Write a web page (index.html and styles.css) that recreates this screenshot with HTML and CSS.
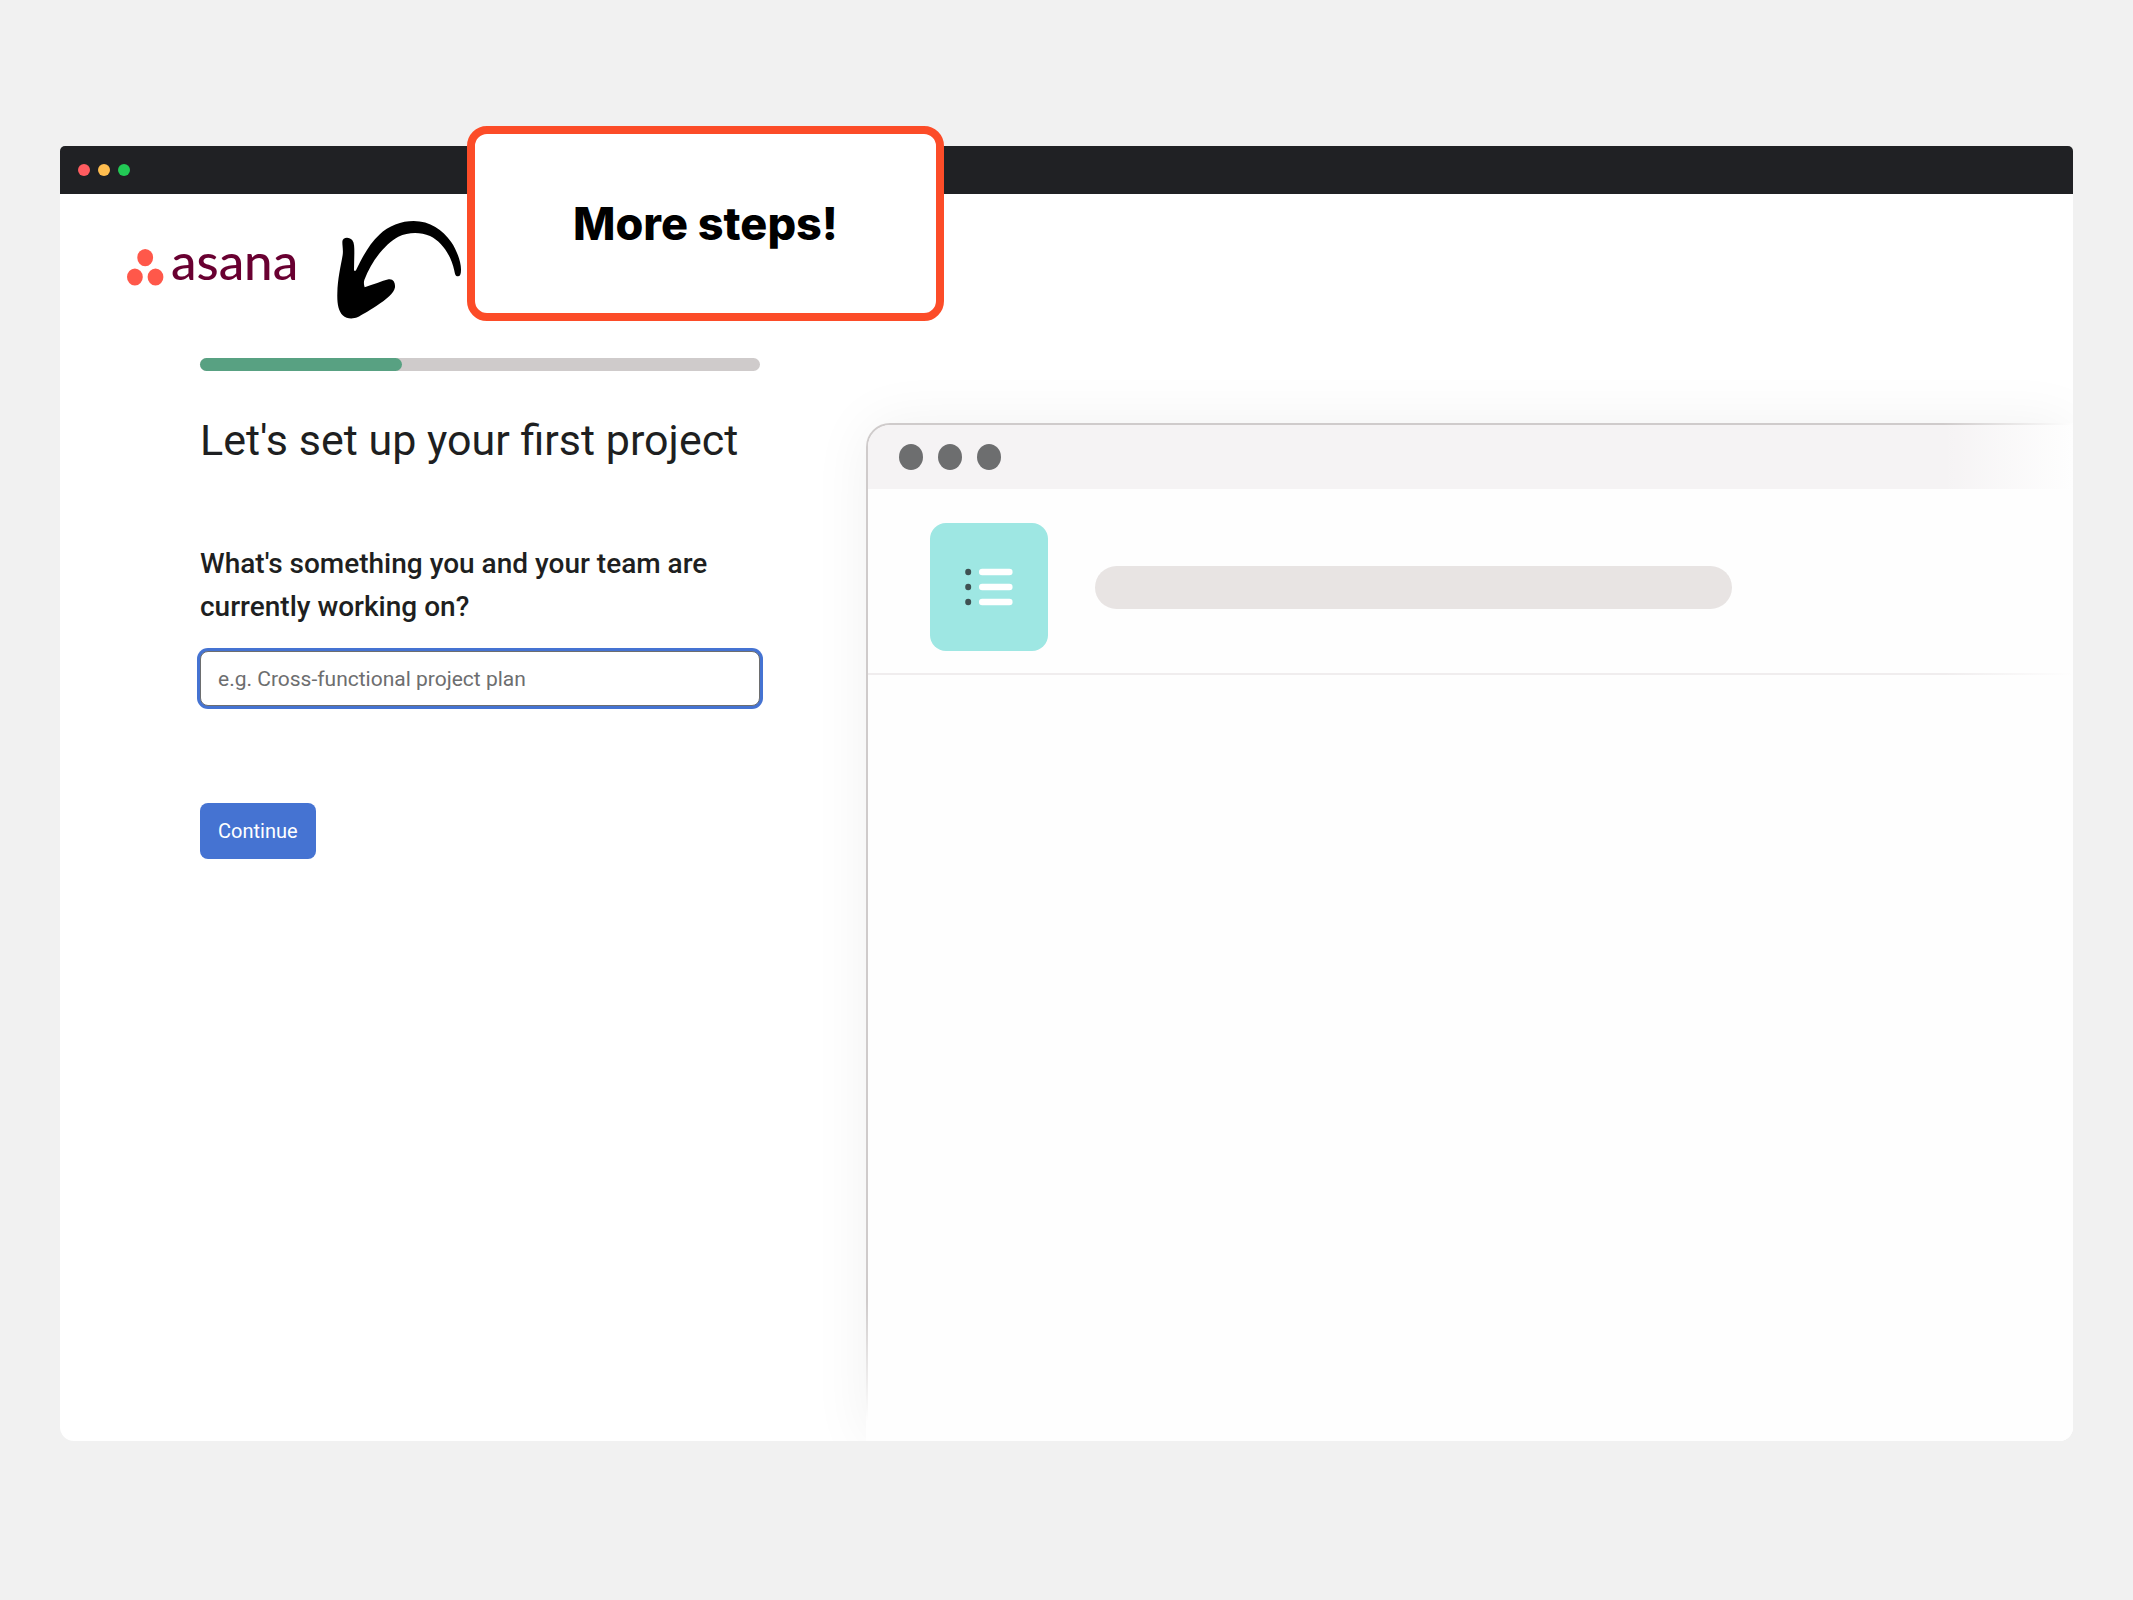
FILE: index.html
```html
<!DOCTYPE html>
<html lang="en">
<head>
<meta charset="utf-8">
<meta name="viewport" content="width=device-width, initial-scale=1">
<title>Asana – Set up your first project</title>
<link rel="stylesheet" href="styles.css">
</head>
<body>
<div class="window">
  <div class="titlebar">
    <span class="light light-close"></span>
    <span class="light light-minimize"></span>
    <span class="light light-expand"></span>
  </div>
  <div class="content">
    <header class="header">
      <a class="logo" href="#">
        <svg class="logo-mark" viewBox="0 0 37 37" aria-hidden="true">
          <ellipse cx="18.2" cy="8.7" rx="7.9" ry="8.6"/>
          <ellipse cx="7.9" cy="28" rx="7.9" ry="8.6"/>
          <ellipse cx="28.5" cy="28" rx="7.9" ry="8.6"/>
        </svg>
        <span class="logo-word">asana</span>
      </a>
    </header>
    <main class="setup">
      <form class="form">
        <div class="progress" role="progressbar" aria-label="Setup progress" aria-valuenow="36" aria-valuemin="0" aria-valuemax="100">
          <div class="progress-fill" style="width: 36%"></div>
        </div>
        <h1 class="title">Let's set up your first project</h1>
        <label class="label" for="project">What's something you and your team are currently working on?</label>
        <input class="input" id="project" type="text" placeholder="e.g. Cross-functional project plan">
        <button class="button" type="button">Continue</button>
      </form>
      <section class="preview" aria-label="Project preview">
        <div class="preview-bar">
          <span class="preview-dot"></span>
          <span class="preview-dot"></span>
          <span class="preview-dot"></span>
        </div>
        <div class="preview-head">
          <div class="tile">
            <svg class="tile-icon" viewBox="0 0 48 38" aria-hidden="true">
              <g fill="#3f5152">
                <ellipse cx="3.2" cy="4" rx="3" ry="3.3"/>
                <ellipse cx="3.2" cy="19" rx="3" ry="3.3"/>
                <ellipse cx="3.2" cy="34" rx="3" ry="3.3"/>
              </g>
              <g fill="#fff">
                <rect x="14" y="0.8" width="33.6" height="6.4" rx="3.2"/>
                <rect x="14" y="15.8" width="33.6" height="6.4" rx="3.2"/>
                <rect x="14" y="30.8" width="33.6" height="6.4" rx="3.2"/>
              </g>
            </svg>
          </div>
          <div class="name-bar"></div>
        </div>
      </section>
    </main>
  </div>
  <svg class="arrow" viewBox="0 0 480 390" aria-hidden="true">
    <path d="M67 125C67 111 89 110 97 121C103 129 103 142 103 160L102 210Q104 216 108 211C130 165 150 130 178 104C205 77 245 63 281 63C330 63 368 90 393 125C412 152 424 190 423 210C423 222 420 229 414 229C406 229 405 222 403 212C393 165 365 125 330 108C300 95 265 96 235 110C200 128 155 180 133 240Q130 250 134 262C160 254 185 243 206 238C220 236 226 248 225 262C222 280 200 298 170 317C145 333 125 345 112 352C100 357 80 358 68 346C55 332 51 310 52 280C53 235 62 200 68 165C70 150 67 138 67 125Z"/>
  </svg>
  <div class="callout">More steps!</div>
</div>
</body>
</html>
```
FILE: styles.css
```css
* {
  box-sizing: border-box;
}

body {
  display: flex;
  min-height: 100vh;
  margin: 0;
  padding: 146px 60px 159px;
  background: #f1f1f1;
  color: #1e1f21;
  font-family: Roboto, "Liberation Sans", sans-serif;
}

.window {
  position: relative;
  display: flex;
  flex: 1;
  flex-direction: column;
  min-width: 0;
}

.titlebar {
  display: flex;
  align-items: center;
  gap: 8px;
  height: 48px;
  padding: 0 18px;
  border-radius: 5px 5px 0 0;
  background: #202124;
}

.light {
  width: 12px;
  height: 12px;
  border-radius: 50%;
}

.light-close {
  background: #ff5c60;
}

.light-minimize {
  background: #ffbd4f;
}

.light-expand {
  background: #22c955;
}

.content {
  display: flex;
  flex: 1;
  flex-direction: column;
  overflow: hidden;
  border-radius: 0 0 14px 14px;
  background: #fff;
}

.header {
  padding: 37px 67px 0;
}

.logo {
  display: inline-flex;
  align-items: flex-end;
  gap: 7px;
  color: #690031;
  text-decoration: none;
}

.logo-mark {
  width: 37px;
  height: 37px;
  margin-bottom: 5px;
  fill: #ff584a;
}

.logo-word {
  font: 500 51px/60px Lato, sans-serif;
}

.setup {
  display: grid;
  flex: 1;
  grid-template-columns: 2fr 3fr;
}

.form {
  display: flex;
  flex-direction: column;
  align-items: stretch;
  padding: 67px 105px 80px 140px;
}

.progress {
  height: 13px;
  border-radius: 7px;
  background: #cfcbcb;
}

.progress-fill {
  height: 100%;
  border-radius: 7px;
  background: #58a182;
}

.title {
  margin: 39px 0 0;
  font-size: 43px;
  font-weight: 400;
  line-height: 60px;
}

.label {
  margin-top: 72px;
  font-size: 28px;
  font-weight: 500;
  line-height: 43px;
}

.input {
  height: 55px;
  margin-top: 23px;
  padding: 0 17px;
  border: 1px solid #6d6e6f;
  border-radius: 8px;
  outline: 0;
  background: #fff;
  box-shadow: 0 0 0 3px #4573d2;
  color: inherit;
  font: 400 21px/28px Roboto, sans-serif;
}

.input::placeholder {
  color: #6d6e6f;
  opacity: 1;
}

.button {
  align-self: flex-start;
  height: 56px;
  margin-top: 97px;
  padding: 0 18px;
  border: 0;
  border-radius: 8px;
  background: #4573d2;
  color: #fff;
  font: 400 20px/28px Roboto, sans-serif;
}

.preview {
  position: relative;
  margin: 132px 0 0 1px;
  border: 2px solid #cfcbcb;
  border-width: 2px 0 0 2px;
  border-radius: 24px 0 0 0;
  background: #fefefe;
  box-shadow: 0 0 60px rgba(0, 0, 0, 0.06);
}

/* Fades the mock window out towards the right and bottom edges. */
.preview::after {
  position: absolute;
  inset: -2px 0 0 -2px;
  background:
    linear-gradient(to left, #fefefe, rgba(254, 254, 254, 0) 130px),
    linear-gradient(to top, #fefefe 20px, rgba(254, 254, 254, 0) 140px);
  content: "";
}

.preview-bar {
  display: flex;
  align-items: center;
  gap: 15px;
  height: 64px;
  padding-left: 31px;
  border-radius: 22px 0 0 0;
  background: #f5f3f4;
}

.preview-dot {
  width: 24px;
  height: 26px;
  border-radius: 50%;
  background: #6d6e6f;
}

.preview-head {
  display: flex;
  align-items: center;
  gap: 47px;
  height: 186px;
  padding: 12px 341px 0 62px;
  border-bottom: 2px solid #f0edee;
}

.tile {
  display: grid;
  flex: none;
  width: 118px;
  height: 128px;
  border-radius: 16px;
  background: #9ee7e3;
  place-items: center;
}

.tile-icon {
  width: 48px;
  height: 38px;
}

.name-bar {
  flex: 1;
  height: 43px;
  border-radius: 22px;
  background: #e8e4e3;
}

.arrow {
  position: absolute;
  top: 54px;
  left: 260px;
  width: 160px;
  height: 130px;
}

.callout {
  position: absolute;
  top: -20px;
  left: 407px;
  display: grid;
  width: 477px;
  height: 195px;
  border: 8px solid #fc4c28;
  border-radius: 20px;
  background: #fff;
  color: #000;
  font: 800 45px/56px Inter, sans-serif;
  place-items: center;
}
```
